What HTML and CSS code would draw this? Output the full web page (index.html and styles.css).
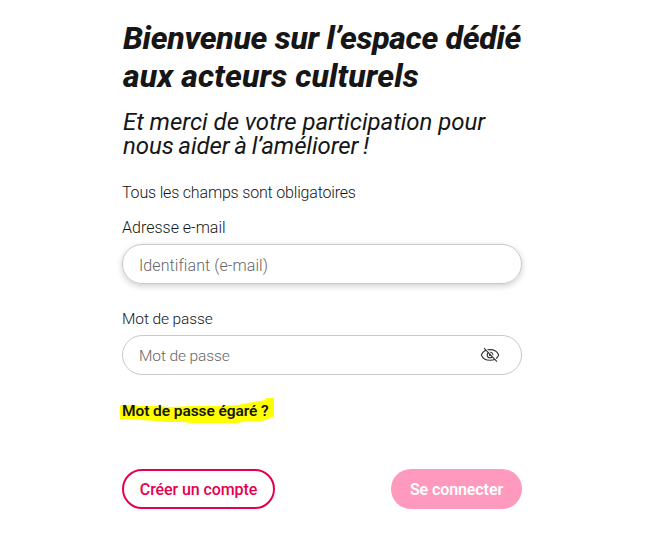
FILE: index.html
```html
<!DOCTYPE html>
<html lang="fr">

<head>
    <meta charset="UTF-8">
    <meta name="viewport" content="width=device-width, initial-scale=1.0">
    <title>Connexion</title>
    <link rel="stylesheet" href="styles.css">
</head>

<body>
    <main class="login">
        <h1 class="title"><span class="title-a">Bienvenue sur l’espace dédié</span><br><span class="title-b">aux acteurs culturels</span></h1>
        <h2 class="subtitle"><span class="sub-a">Et merci de votre participation pour</span><br><span class="sub-b">nous aider à l’améliorer !</span></h2>
        <form class="form">
            <p class="required">Tous les champs sont obligatoires</p>
            <label class="label label-email" for="email">Adresse e-mail</label>
            <div class="field active">
                <input class="input input-email" id="email" type="email" placeholder="Identifiant (e-mail)">
            </div>
            <label class="label label-password" for="password">Mot de passe</label>
            <div class="field">
                <input class="input input-password" id="password" type="password" placeholder="Mot de passe">
                <button class="eye" type="button" aria-label="Afficher le mot de passe">
                    <svg width="20" height="16" viewBox="0 0 20 16" fill="none" stroke="#333" stroke-width="1.1">
                        <path d="M1.3 8C2.7 4.4 6 2.6 10 2.6S17.3 4.4 18.7 8C17.3 11.5 14 13.3 10 13.3S2.7 11.5 1.3 8Z" />
                        <circle cx="10" cy="8" r="2.8" />
                        <circle cx="10" cy="8" r=".6" />
                        <path d="M5.2 1.2L18 14.4" stroke="#fff" stroke-width="1.4" />
                        <path d="M4 1.2L17 14.6" />
                    </svg>
                </button>
            </div>
            <a class="forgot" href="#">
                <svg class="marker" width="154" height="27" viewBox="0 0 154 27">
                    <path d="M0 7L17 7L17 8L37 8L50 9L72 8L98 8L118 7L128 5L139 3L146 2L146 0L154 0L154 19L150 19L149 21L142 23L130 23L117 25L72 25L62 24L44 24L38 23L19 22L19 21L0 21Z" fill="#ff0" />
                </svg>
                <span class="forgot-text">Mot de passe égaré ?</span>
            </a>
            <div class="actions">
                <button class="btn btn-create" type="button">Créer un compte</button>
                <button class="btn btn-login" type="submit" disabled>Se connecter</button>
            </div>
        </form>
    </main>
</body>

</html>
```
FILE: styles.css
```css
* {
    box-sizing: border-box;
    margin: 0;
    padding: 0;
}

body {
    background-color: #fff;
    color: #161616;
    font-family: Roboto, "Liberation Sans", sans-serif;
    font-size: 16px;
}

.login {
    width: 400px;
    margin: 19px 0 0 122px;
}

.title {
    padding-left: 1px;
    font-size: 32px;
    font-weight: 800;
    font-style: italic;
    line-height: 38px;
    white-space: nowrap;
}

.title-a {
    letter-spacing: -.3px;
}

.title-b {
    letter-spacing: .12px;
}

.subtitle {
    margin-top: 15px;
    padding-left: 1px;
    font-size: 24px;
    font-weight: 400;
    font-style: italic;
    line-height: 24px;
    white-space: nowrap;
}

.sub-a {
    letter-spacing: -.04px;
}

.sub-b {
    letter-spacing: -.1px;
    word-spacing: -1px;
}

.required {
    margin-top: 25px;
    font-weight: 300;
    line-height: 20px;
    letter-spacing: -.18px;
}

.label {
    display: block;
    font-weight: 300;
    line-height: 20px;
}

.label-email {
    margin: 15px 0 5.5px;
}

.label-password {
    margin: 25px 0 6px;
    font-size: 15.5px;
    letter-spacing: -.1px;
}

.field {
    display: flex;
    align-items: center;
    height: 40px;
    padding: 3px 21px 0 16px;
    border: 1px solid #c8c8c8;
    border-radius: 20px;
}

.active {
    box-shadow: 0 2px 6px rgba(0, 0, 0, .2);
}

.input {
    flex: 1;
    min-width: 0;
    border: none;
    outline: none;
    background: transparent;
    font: inherit;
    font-weight: 300;
}

.input-email {
    letter-spacing: .08px;
}

.input-password {
    font-size: 15.5px;
    letter-spacing: -.1px;
}

.input::placeholder {
    color: #666;
}

.eye {
    display: flex;
    border: none;
    background: none;
    margin-top: -3px;
}

.forgot {
    display: block;
    position: relative;
    width: fit-content;
    margin-top: 26px;
    color: #161616;
    font-size: 15.5px;
    font-weight: 600;
    line-height: 20px;
    letter-spacing: -.08px;
    text-decoration: none;
}

.marker {
    position: absolute;
    left: -2px;
    top: -3px;
}

.forgot-text {
    position: relative;
}

.actions {
    display: flex;
    justify-content: space-between;
    margin-top: 48px;
}

.btn {
    height: 40px;
    padding-top: 2px;
    border-radius: 20px;
    font: inherit;
    font-weight: 500;
}

.btn-create {
    width: 153px;
    border: 2px solid #e5004f;
    background-color: #fff;
    color: #e5004f;
    letter-spacing: -.1px;
}

.btn-login {
    width: 131px;
    border: none;
    background-color: #ff99bd;
    color: #fff;
    font-weight: 600;
    letter-spacing: -.1px;
}
```
